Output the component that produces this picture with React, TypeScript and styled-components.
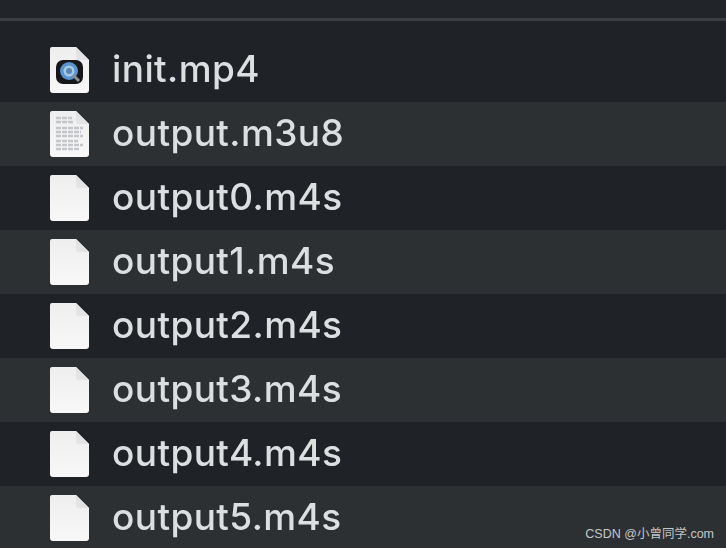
import styled, { createGlobalStyle } from "styled-components";

const GlobalStyle = createGlobalStyle`
  html, body {
    margin: 0;
    padding: 0;
    width: 100%;
    height: 100%;
    overflow: hidden;
    background-color: #1f2327;
  }
`;

const Window = styled.div`
  position: relative;
  width: 726px;
  height: 548px;
  overflow: hidden;
  background-color: #1f2327;
  font-family: Inter, "Liberation Sans", sans-serif;
`;

const TopBar = styled.div`
  height: 18px;
  background-color: #212529;
  border-bottom: 3px solid #3a3d41;
  box-sizing: content-box;
`;

const FirstGap = styled.div`
  height: 17px;
`;

const Row = styled.div<{ $striped: boolean }>`
  display: flex;
  align-items: center;
  height: 64px;
  padding-left: 50px;
  gap: 23px;
  background-color: ${(p) => (p.$striped ? "#2d3033" : "#1f2327")};
`;

const Name = styled.span`
  font-size: 37px;
  font-weight: 500;
  line-height: 62px;
  height: 64px;
  letter-spacing: 0.4px;
  color: #dcdee0;
  filter: blur(0.7px);
`;

const Watermark = styled.div`
  position: absolute;
  right: 12px;
  bottom: 6px;
  font-family: "Liberation Sans", "Noto Sans CJK SC", sans-serif;
  font-size: 12.5px;
  line-height: 16px;
  color: #c4c7c9;
`;

const IconSvg = styled.svg`
  flex: none;
  width: 39px;
  height: 46px;
  filter: blur(0.7px);
`;

type Kind = "movie" | "text" | "plain";

const FileIcon = ({ kind }: { kind: Kind }) => (
  <IconSvg viewBox="0 0 39 46">
    <defs>
      <linearGradient id="sheet" x1="0" y1="0" x2="0" y2="1">
        <stop offset="0" stopColor="#eeeeef" />
        <stop offset="1" stopColor="#f8f8f9" />
      </linearGradient>
    </defs>
    <path
      d="M2 0H26L39 13V43a3 3 0 0 1-3 3H3a3 3 0 0 1-3-3V2a2 2 0 0 1 2-2Z"
      fill="url(#sheet)"
    />
    <path d="M26 0L39 13H29a3 3 0 0 1-3-3Z" fill="#e2e3e5" />
    {kind === "movie" && (
      <g>
        <rect x="6" y="13" width="27" height="24" rx="7" fill="#15171a" />
        <circle cx="19" cy="24" r="9" fill="#5b93cc" />
        <circle cx="19" cy="24" r="5.5" fill="#a5c9e8" />
        <circle cx="19" cy="24" r="3" fill="#5a86b0" />
        <path d="M23 28l6 6" stroke="#8b9096" strokeWidth="3" />
      </g>
    )}
    {kind === "text" && (
      <g stroke="#c4c6c9" strokeWidth="2.6" strokeDasharray="5 1">
        <path d="M6 7H22" />
        <path d="M6 11H24" />
        <path d="M6 17H33" />
        <path d="M6 21H31" />
        <path d="M6 25H33" />
        <path d="M6 30H28" />
        <path d="M6 34H33" />
        <path d="M6 38H30" />
      </g>
    )}
  </IconSvg>
);

const files: { name: string; kind: Kind }[] = [
  { name: "init.mp4", kind: "movie" },
  { name: "output.m3u8", kind: "text" },
  { name: "output0.m4s", kind: "plain" },
  { name: "output1.m4s", kind: "plain" },
  { name: "output2.m4s", kind: "plain" },
  { name: "output3.m4s", kind: "plain" },
  { name: "output4.m4s", kind: "plain" },
  { name: "output5.m4s", kind: "plain" },
];

export default function App() {
  return (
    <Window>
      <GlobalStyle />
      <TopBar />
      <FirstGap />
      {files.map((f, i) => (
        <Row key={f.name} $striped={i % 2 === 1}>
          <FileIcon kind={f.kind} />
          <Name>{f.name}</Name>
        </Row>
      ))}
      <Watermark>CSDN @小曾同学.com</Watermark>
    </Window>
  );
}
